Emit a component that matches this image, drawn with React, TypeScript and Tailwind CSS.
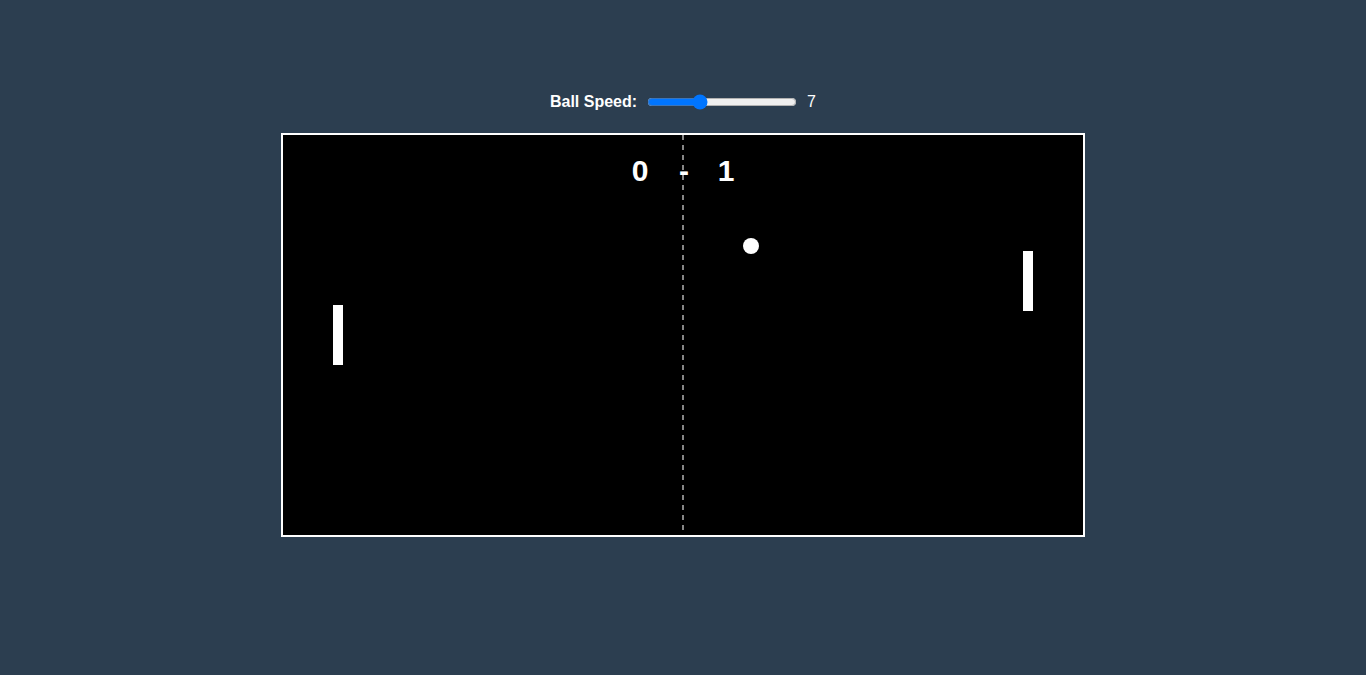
import React, { useState } from 'react';

const W = 800;
const H = 400;

const Court: React.FC<{ left: number; right: number }> = ({ left, right }) => (
  <svg width={W} height={H} viewBox={`0 0 ${W} ${H}`} className="block">
    <rect x={0} y={0} width={W} height={H} fill="#000" />
    <line x1={400} y1={0} x2={400} y2={H} stroke="#888" strokeWidth={2} strokeDasharray="5 5" />
    <g fill="#fff" fontFamily="'Liberation Sans', Arial, sans-serif" fontWeight="bold" fontSize={30} textAnchor="middle">
      <text x={357} y={46}>{left}</text>
      <text x={401} y={46}>-</text>
      <text x={443} y={46}>{right}</text>
    </g>
    <rect x={50} y={170} width={10} height={60} fill="#fff" />
    <rect x={740} y={116} width={10} height={60} fill="#fff" />
    <circle cx={468} cy={111} r={8} fill="#fff" />
  </svg>
);

export default function App() {
  const [speed, setSpeed] = useState(7);

  return (
    <div className="min-h-screen bg-[#2c3e50] flex flex-col items-center pt-[92px] text-white font-['Liberation_Sans',Arial,sans-serif]">
      <div className="h-5 flex items-center gap-2 mb-[21px] text-base">
        <label htmlFor="speed" className="font-bold">Ball Speed:</label>
        <input
          id="speed"
          type="range"
          min={1}
          max={19}
          value={speed}
          onChange={(e) => setSpeed(Number(e.target.value))}
          className="w-[150px] m-[2px]"
        />
        <span>{speed}</span>
      </div>
      <div className="border-2 border-white">
        <Court left={0} right={1} />
      </div>
    </div>
  );
}
